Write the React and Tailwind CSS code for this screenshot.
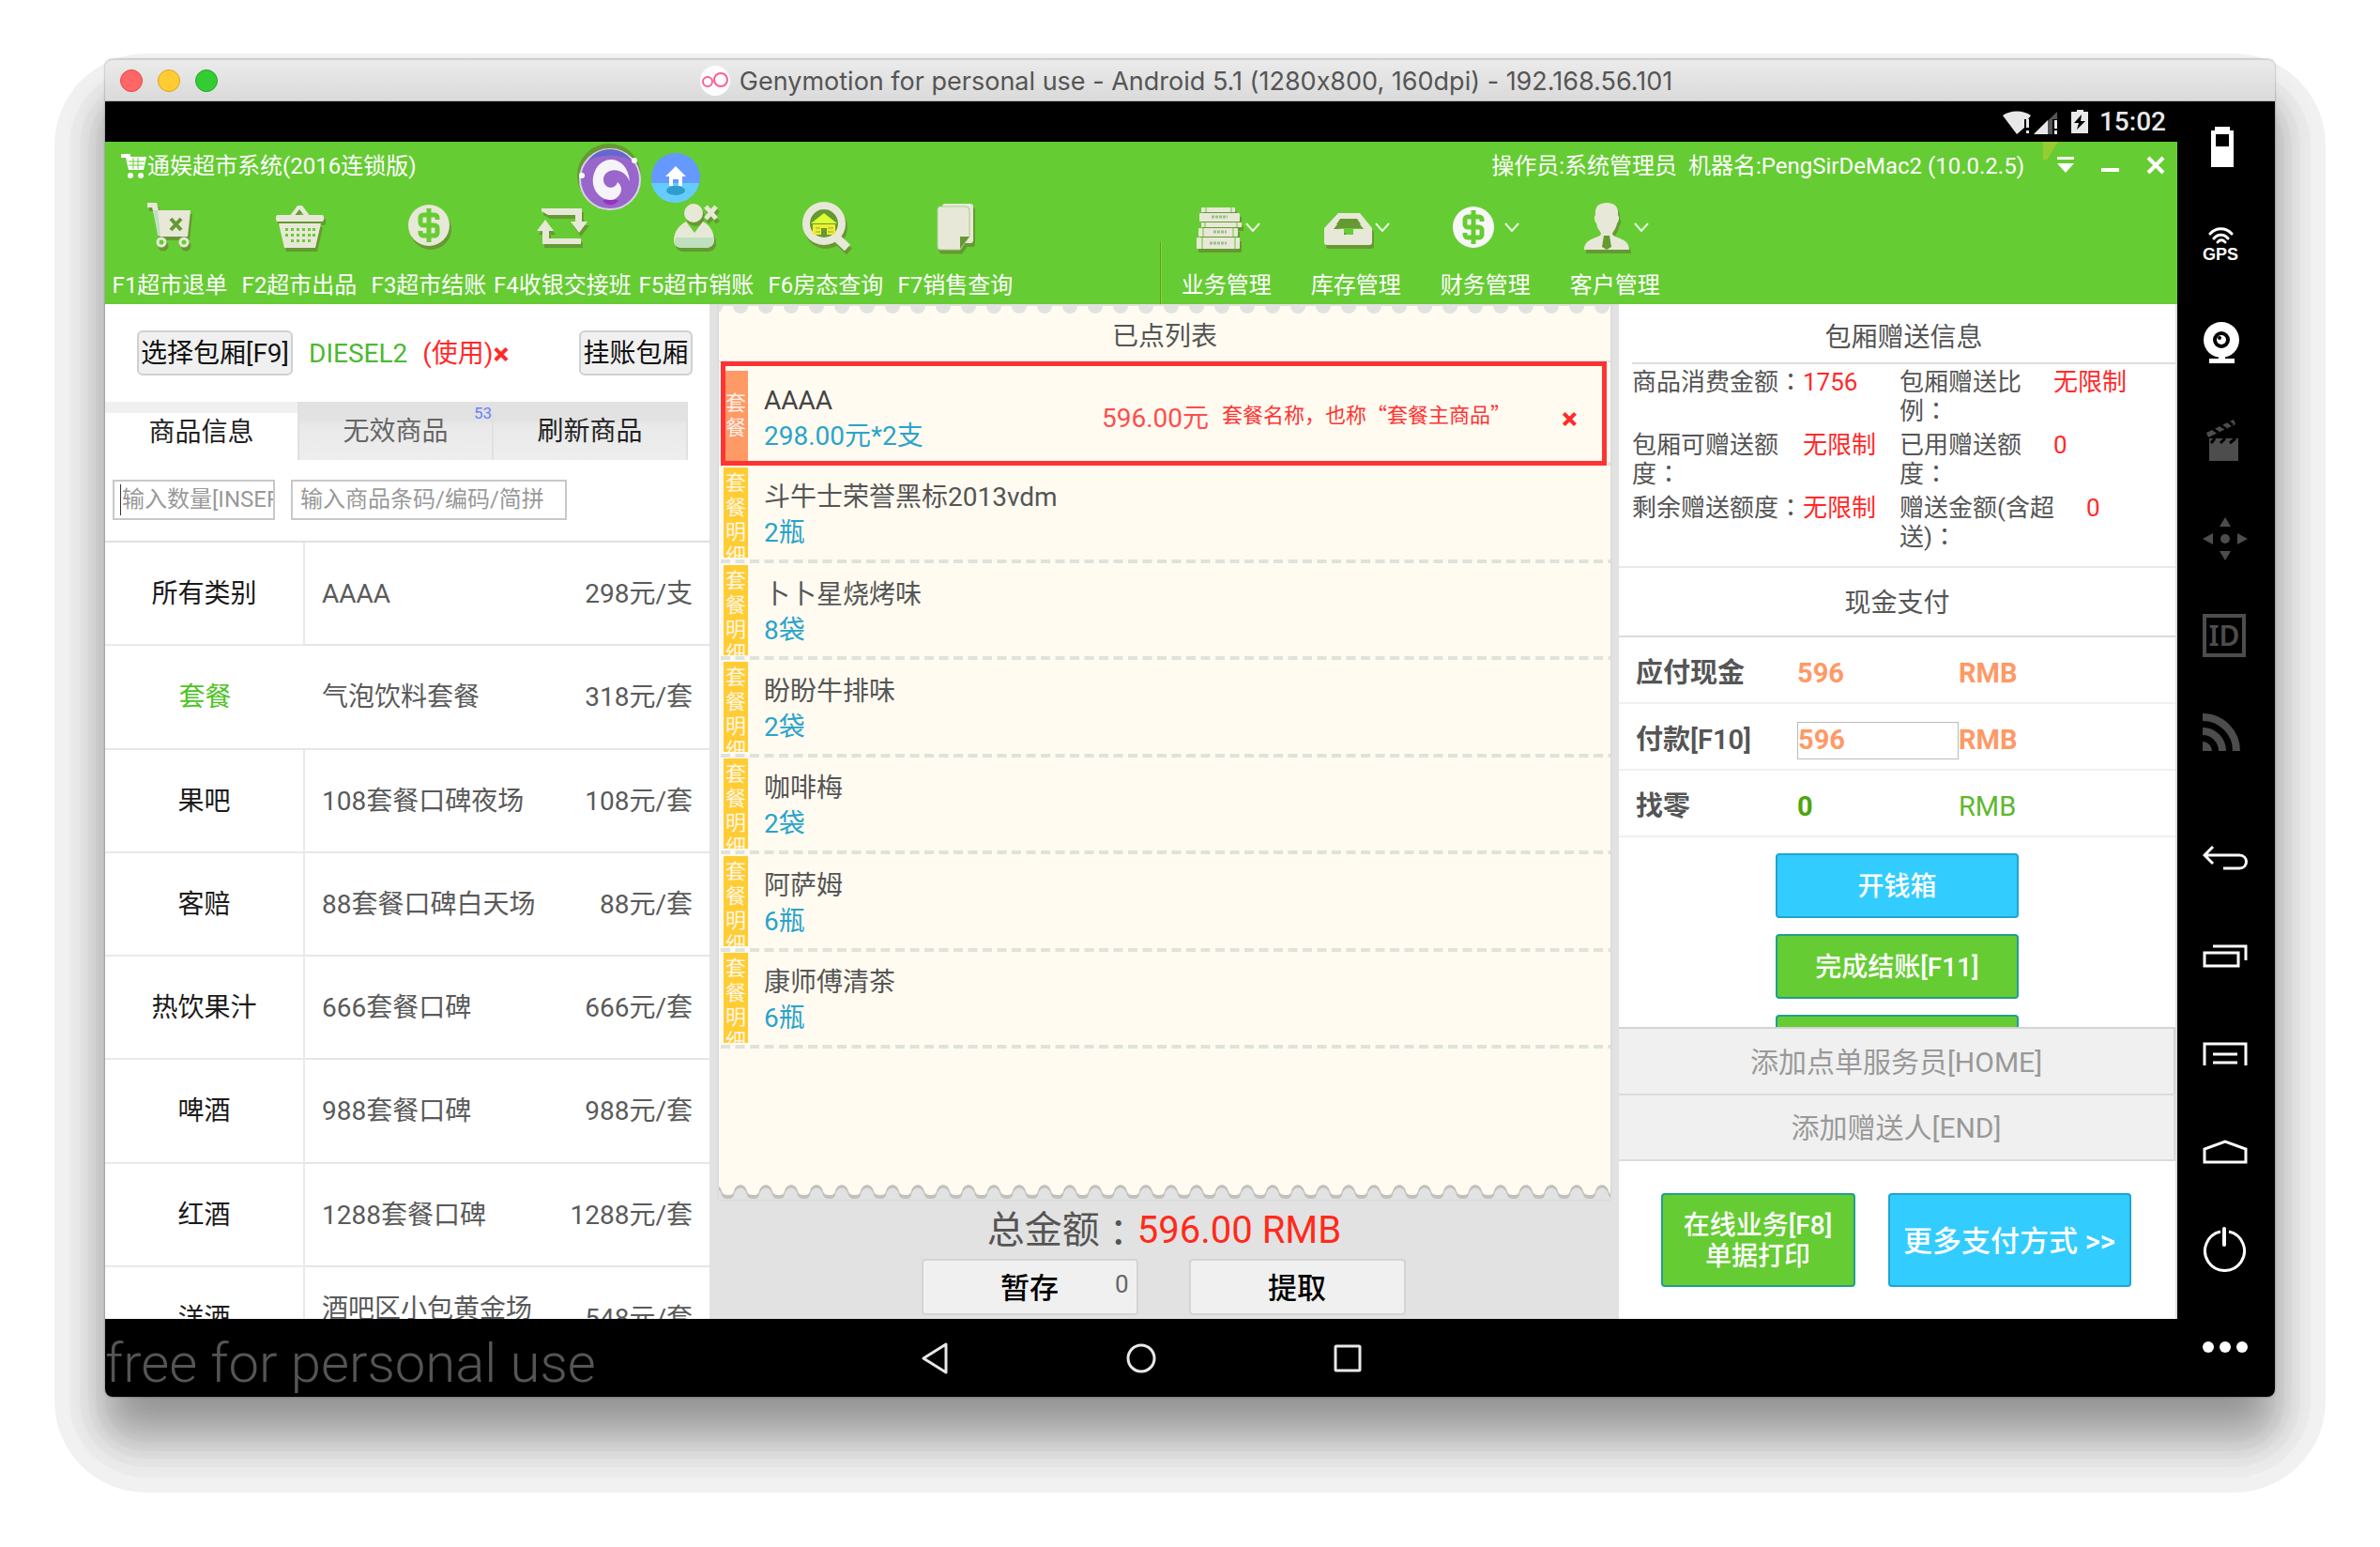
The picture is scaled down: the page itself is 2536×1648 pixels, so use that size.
import React from "react";

const CREAM = "#e8e8d8";
const LEAF = "#66cc33";
const MOSS = "#669933";

/* Full-width colon, centred in its cell */
const Colon = () => <span className="font-['Noto_Sans_CJK_TC',sans-serif] leading-none">：</span>;

/* ---------- toolbar icons ---------- */

const Glyph = ({ children, plain }) => (
  <svg
    viewBox="0 0 56 56"
    aria-hidden="true"
    className={plain ? "size-14 shrink-0" : "size-14 shrink-0 drop-shadow-[2px_4px_0_#669933]"}
    fill={CREAM}
  >
    {children}
  </svg>
);

const CartIcon = () => (
  <Glyph>
    <path d="M4 2h10l2 8h34l-3 28H17l-3-12L9 7H4z" fill={CREAM} />
    <path d="M10 10l5 0 3 27h-3z" fill="#bfe0bf" />
    <path d="M29 19l11 12M40 19L29 31" stroke={MOSS} strokeWidth="4" fill="none" />
    <circle cx="19" cy="44" r="4" fill={LEAF} stroke={CREAM} strokeWidth="3" />
    <circle cx="43" cy="44" r="4" fill={LEAF} stroke={CREAM} strokeWidth="3" />
  </Glyph>
);

const BasketIcon = () => (
  <Glyph>
    <path d="M17 17L26 5h5l9 12h-6l-6-8-6 8z" />
    <rect x="3" y="15" width="51" height="7" rx="2" />
    <path d="M6 24h45l-6 26H12z" />
    {[29, 35, 41].map((y, r) =>
      [14, 20, 26, 32, 38, 43].slice(r === 2 ? 1 : 0, r === 2 ? 5 : 6).map((x) => (
        <rect key={x + "-" + y} x={x - 1} y={y} width="3" height="3" fill={LEAF} />
      ))
    )}
  </Glyph>
);

const DollarShape = ({ fill }) => (
  <>
    <circle cx="28" cy="26" r="22" fill={fill} />
    <path
      d="M37 20v-2a3 3 0 0 0-3-3H22a3 3 0 0 0-3 3v5a3 3 0 0 0 3 3h12a3 3 0 0 1 3 3v5a3 3 0 0 1-3 3H22a3 3 0 0 1-3-3v-2M28 8v36"
      fill="none"
      stroke={LEAF}
      strokeWidth="5"
    />
  </>
);

const DollarIcon = () => (
  <Glyph>
    <DollarShape fill={CREAM} />
  </Glyph>
);

const PlainDollarIcon = () => (
  <Glyph plain>
    <g transform="translate(-5 2)">
      <DollarShape fill="#f7f7f7" />
    </g>
  </Glyph>
);

const RepeatIcon = () => (
  <Glyph>
    <path d="M6 8h43v14h6L46 34l-9-12h5v-7H13l-7-4z" />
    <path d="M10 20l9 12h-5v8h34v6H7V32H1z" />
  </Glyph>
);

const UserXIcon = () => (
  <Glyph>
    <circle cx="25" cy="13" r="10" />
    <path d="M17 22l9 12 9-12c8 4 12 12 12 20 0 5-4 8-10 8H14c-7 0-10-3-10-8 0-8 5-16 13-20z" />
    <path d="M6 39h40c2 7-2 11-9 11H14c-7 0-11-3-8-11z" fill="#bfe0bf" />
    <path d="M38 6l11 13M49 6L38 19" stroke={CREAM} strokeWidth="5" fill="none" />
  </Glyph>
);

const SearchHouseIcon = () => (
  <Glyph>
    <path d="M38 38l13 12" stroke={CREAM} strokeWidth="9" fill="none" />
    <circle cx="26" cy="24" r="19" fill={MOSS} stroke={CREAM} strokeWidth="8" />
    <path d="M12 24l14-11 14 11z" fill="#ddff33" />
    <path d="M14 25h24v11h-9v-7h-6v7h-9z" fill="#eeee33" />
    <path d="M17 29h5M17 33h5M30 29h6M30 33h6" stroke="#99aa33" strokeWidth="1" />
  </Glyph>
);

const DocIcon = () => (
  <Glyph>
    <rect x="14" y="3" width="33" height="42" rx="3" />
    <path d="M12 6h27a4 4 0 0 1 4 4v28L33 52H12a3 3 0 0 1-3-3V9a3 3 0 0 1 3-3z" stroke="#a6cf8e" strokeWidth="1" />
    <path d="M43 38H33v13z" fill={MOSS} />
  </Glyph>
);

const BooksIcon = () => (
  <Glyph>
    <rect x="9" y="7" width="36" height="5" />
    <rect x="7" y="13" width="43" height="9" rx="1" />
    <rect x="9" y="23" width="43" height="5" />
    <rect x="6" y="29" width="42" height="9" rx="1" />
    <rect x="4" y="39" width="46" height="12" rx="1" />
    <path d="M20 17h17M22 33h14M18 45h18" stroke="#99c08a" strokeWidth="3" strokeDasharray="3 1" />
    <path d="M14 7v5M41 7v5M13 23v5M47 23v5M11 29v9M43 29v9M10 39v12M45 39v12" stroke={LEAF} strokeWidth="1" />
  </Glyph>
);

const InboxIcon = () => (
  <Glyph>
    <path
      fillRule="evenodd"
      d="M17 13h23l13 16v15a3 3 0 0 1-3 3H5a3 3 0 0 1-3-3V29zM20 20l-8 10h11v6h10v-6h11l-8-10z"
    />
    <path d="M19 19h18l4 6H15z" fill={MOSS} />
  </Glyph>
);

const ManIcon = () => (
  <Glyph>
    <path d="M27 2c8 0 13 4 12 13 2 2 1 7-1 9-1 6-4 8-5 11 1 5 18 4 18 17H3c0-13 17-12 18-17-1-3-4-5-5-11-2-2-3-7-1-9C14 6 19 2 27 2z" />
    <path d="M24 37h6l2 12-5 3-5-3z" fill={MOSS} />
  </Glyph>
);

const TOOLS = [
  ["F1超市退单", CartIcon],
  ["F2超市出品", BasketIcon],
  ["F3超市结账", DollarIcon],
  ["F4收银交接班", RepeatIcon],
  ["F5超市销账", UserXIcon],
  ["F6房态查询", SearchHouseIcon],
  ["F7销售查询", DocIcon],
];

const MENUS = [
  ["业务管理", BooksIcon],
  ["库存管理", InboxIcon],
  ["财务管理", PlainDollarIcon],
  ["客户管理", ManIcon],
];

/* ---------- data ---------- */

const CATEGORIES = ["所有类别", "套餐", "果吧", "客赔", "热饮果汁", "啤酒", "红酒", "洋酒"];

const PRODUCTS = [
  ["AAAA", "298元/支"],
  ["气泡饮料套餐", "318元/套"],
  ["108套餐口碑夜场", "108元/套"],
  ["88套餐口碑白天场", "88元/套"],
  ["666套餐口碑", "666元/套"],
  ["988套餐口碑", "988元/套"],
  ["1288套餐口碑", "1288元/套"],
  ["酒吧区小包黄金场", "548元/套"],
];

const ORDER = [
  ["斗牛士荣誉黑标2013vdm", "2瓶"],
  ["卜卜星烧烤味", "8袋"],
  ["盼盼牛排味", "2袋"],
  ["咖啡梅", "2袋"],
  ["阿萨姆", "6瓶"],
  ["康师傅清茶", "6瓶"],
];

/* ---------- window chrome ---------- */

const TitleBar = () => (
  <div className="relative flex h-[45px] shrink-0 items-center justify-center rounded-t-lg border-t border-b border-t-[#cfcfcf] border-b-[#b8b8b8] bg-linear-to-b from-[#ebebeb] to-[#dadada]">
    <div className="absolute left-4 flex gap-4">
      <button aria-label="Close" className="size-6 rounded-full border border-[#ee4444] bg-[#ff6666]" />
      <button aria-label="Minimize" className="size-6 rounded-full border border-[#dba520] bg-[#ffcc33]" />
      <button aria-label="Zoom" className="size-6 rounded-full border border-[#22a822] bg-[#33cc33]" />
    </div>
    <svg viewBox="0 0 32 32" className="mr-[10px] size-8" aria-hidden="true">
      <circle cx="16" cy="16" r="16" fill="#fff" />
      <g fill="none" stroke="#ff5c93" strokeWidth="2">
        <circle cx="8" cy="17" r="5" />
        <circle cx="22" cy="15" r="7" />
      </g>
    </svg>
    <span className="pt-[2px] pr-2 font-['Inter',sans-serif] text-[27px] leading-none text-[#555] [font-feature-settings:'calt'_0]">
      Genymotion for personal use - Android 5.1 (1280x800, 160dpi) - 192.168.56.101
    </span>
  </div>
);

const StatusBar = () => (
  <div className="flex h-[43px] shrink-0 items-center justify-end gap-3 bg-black pr-3 text-[#e8e8e8]">
    <svg viewBox="0 0 92 28" className="h-7 w-[92px]" aria-hidden="true">
      <path d="M1 7C9 1 23 1 31 7l-3 4h-4v9l-8 7z" fill="#e8e8e8" />
      <path d="M26 11h3v9h-3zM26 23h3v3h-3z" fill="#e8e8e8" />
      <path d="M34 27L59 3v8h-5v16z" fill="#555" />
      <path d="M34 27L49 12v15z" fill="#e8e8e8" />
      <path d="M56 12h3v9h-3zM56 23h3v4h-3z" fill="#e8e8e8" />
      <path d="M80 1h7v2h5v23H74V3h6z" fill="#e8e8e8" />
      <path d="M85 6l-8 9h5l-2 7 9-9h-5z" fill="#000" />
    </svg>
    <span className="text-[28px] font-medium">15:02</span>
  </div>
);

const Header = () => (
  <header className="relative flex shrink-0 flex-col bg-[#66cc33] text-white">
    <div className="flex h-[52px] items-center pr-[11px] pl-[17px] text-[24px]">
      <svg viewBox="0 0 28 28" className="size-7" aria-hidden="true" fill="#fff">
        <path d="M0 1h10v3h17l-3 14H8L5 5H0z" />
        <path d="M8 9h17M8 13h16M13 5v12M18 5v12" stroke={LEAF} strokeWidth="1" />
        <circle cx="10" cy="24" r="3" />
        <circle cx="21" cy="24" r="3" />
      </svg>
      <h1>通娱超市系统(2016连锁版)</h1>
      <p className="ml-auto flex gap-3">
        <span>操作员:系统管理员</span>
        <span>机器名:PengSirDeMac2 (10.0.2.5)</span>
      </p>
      <div className="ml-8 flex gap-6">
        <button aria-label="收起" className="flex size-6 items-center justify-center">
          <svg viewBox="0 0 24 24" className="size-6" fill="#fff" aria-hidden="true">
            <path d="M3 2h18v3H3zM3 9h18l-9 10z" />
          </svg>
        </button>
        <button aria-label="最小化" className="flex size-6 items-center justify-center">
          <svg viewBox="0 0 24 24" className="size-6" fill="#fff" aria-hidden="true">
            <path d="M2 14h19v4H2z" />
          </svg>
        </button>
        <button aria-label="关闭" className="flex size-6 items-center justify-center">
          <svg viewBox="0 0 24 24" className="size-6" stroke="#fff" strokeWidth="4" aria-hidden="true">
            <path d="M4 3l16 16M20 3L4 19" />
          </svg>
        </button>
      </div>
      <svg viewBox="0 0 16 19" className="absolute top-0 right-[127px] h-[19px] w-4" aria-hidden="true">
        <path d="M0 0h16L4 19H0z" fill="#99cc33" />
      </svg>
    </div>

    <nav className="flex h-[121px] text-[24px]">
      {TOOLS.map(([label, Icon]) => (
        <button key={label} className="flex min-w-[138px] flex-col items-center justify-between pt-[11px] whitespace-nowrap">
          <Icon />
          <span className="leading-[40px]">{label}</span>
        </button>
      ))}
      <div className="mt-[55px] ml-[149px] w-[2px] border-l border-[#4fa61f] bg-[#99cc33]" />
      {MENUS.map(([label, Icon]) => (
        <button key={label} className="flex w-[138px] flex-col items-center justify-between pt-[11px] whitespace-nowrap">
          <span className="flex items-center">
            <Icon />
            <svg viewBox="0 0 16 10" className="h-[10px] w-4" fill="none" stroke="#e6f5dc" strokeWidth="2" aria-hidden="true">
              <path d="M1 1l7 8 7-8" />
            </svg>
          </span>
          <span className="leading-[40px]">{label}</span>
        </button>
      ))}
    </nav>

    {/* floating assistant bubbles */}
    <div className="absolute top-[2px] left-[503px] flex items-center gap-[10px]">
      <svg viewBox="0 0 68 72" className="h-[72px] w-[68px]" aria-hidden="true">
        <circle cx="34" cy="34" r="34" fill="#669933" />
        <circle cx="35" cy="38" r="32" fill="#9966cc" stroke="#d9d4ea" strokeWidth="2" />
        <path d="M12 18C22 2 48 2 58 18c-12-7-34-7-46 0z" fill="#6666cc" />
        <circle cx="61" cy="18" r="3" fill="#fff" />
        <circle cx="5" cy="34" r="3" fill="#fff" />
        <path d="M27 60h17c-3 7-14 7-17 0z" fill="#9933bb" />
        <path
          d="M56 40C54 15 30 10 20 27c-9 17 2 33 16 33 10-1 15-13 7-19-2 8-14 8-15-2-1-12 20-17 28 1z"
          fill="#f6f4fa"
        />
      </svg>
      <svg viewBox="0 0 54 54" className="size-[54px]" aria-hidden="true">
        <circle cx="27" cy="27" r="26" fill="#6699ff" />
        <path d="M1 33h51a26 26 0 0 1-51 0z" fill="#66ccff" />
        <ellipse cx="27" cy="41" rx="10" ry="5" fill="#2f9ccc" />
        <path d="M27 15l11 11h-4v10h-4v-7h-6v7h-4V26h-4z" fill="#fff" />
      </svg>
    </div>
  </header>
);

/* ---------- left column ---------- */

const ProductPanel = () => (
  <section className="flex w-[644px] shrink-0 flex-col bg-white text-[28px]">
    <div className="flex h-[104px] shrink-0 items-center pr-[18px] pl-[34px]">
      <button className="h-12 w-[166px] rounded-md border-2 border-[#d0d0d0] bg-[#f0f0f0] pt-[2px] leading-none whitespace-nowrap text-[#111]">
        选择包厢[F9]
      </button>
      <span className="ml-[17px] pt-[2px] text-[#4db832]">DIESEL2</span>
      <span className="ml-4 flex items-center pt-[2px] leading-none text-[#ff2a2a]">
        (使用)
        <button aria-label="取消包厢" className="text-[32px] font-extrabold">×</button>
      </span>
      <button className="ml-auto h-12 w-[121px] rounded-md border-2 border-[#d0d0d0] bg-[#f0f0f0] pt-[2px] leading-none whitespace-nowrap text-[#111]">
        挂账包厢
      </button>
    </div>

    <div className="mr-[23px] flex h-[62px] shrink-0 leading-none">
      <button className="flex-1 border-t-[12px] border-[#f0f0f0] bg-white pb-2 text-[#222]">商品信息</button>
      <button className="relative flex-1 border-l-2 border-[#e0e0e0] bg-linear-to-b from-[#e2e2e2] from-30% via-[#e9e9e9] via-40% to-[#eeeeee] pt-[2px] text-[#666]">
        无效商品
        <span className="absolute top-1 right-0 text-[17px] text-[#6680ff]">53</span>
      </button>
      <button className="flex-1 border-x-2 border-[#e0e0e0] bg-linear-to-b from-[#e2e2e2] from-30% via-[#e9e9e9] via-40% to-[#eeeeee] pt-[2px] text-[#222]">
        刷新商品
      </button>
    </div>

    <div className="flex h-[88px] shrink-0 items-center gap-[17px] border-b-2 border-[#e0e0e0] pb-[2px] pl-2 text-[24px]">
      <div className="relative">
        <input
          aria-label="输入数量"
          placeholder="输入数量[INSERT]"
          className="block h-[43px] w-[173px] border-2 border-[#c8c8c8] pl-2 placeholder:text-[#999]"
        />
        <span className="absolute top-[5px] left-2 h-[33px] w-px bg-[#333]" />
      </div>
      <input
        aria-label="输入商品条码"
        placeholder="输入商品条码/编码/简拼"
        className="h-[43px] w-[294px] border-2 border-[#c8c8c8] pl-2 placeholder:text-[#999]"
      />
    </div>

    <div className="flex min-h-0 flex-1 overflow-hidden">
      <ul className="w-[213px] shrink-0">
        {CATEGORIES.map((name) => (
          <li key={name} className="h-2/15">
            <button
              className={
                name === "套餐"
                  ? "size-full border-b-2 border-[#e6e6e6] pt-[2px] text-[#4dc41f]"
                  : "size-full border-r-2 border-b-2 border-[#e9e9e9] pt-[2px] text-[#1a1a1a]"
              }
            >
              {name}
            </button>
          </li>
        ))}
      </ul>
      <ul className="min-w-0 flex-1">
        {PRODUCTS.map(([name, price], i) => (
          <li
            key={name}
            className="flex h-2/15 items-center justify-between border-b-2 border-[#e6e6e6] px-[18px] pt-[2px] whitespace-nowrap text-[#5a5a5a]"
          >
            <span className={i === 7 ? "pb-5" : ""}>{name}</span>
            <span>{price}</span>
          </li>
        ))}
      </ul>
    </div>
  </section>
);

/* ---------- middle column ---------- */

const Dashes = () => (
  <svg className="h-1 w-full" aria-hidden="true">
    <line x1="2" y1="2" x2="100%" y2="2" stroke="#e0e2dc" strokeWidth="4" strokeDasharray="10 5.5" />
  </svg>
);

const TopEdge = () => (
  <svg className="h-[11px] w-full shrink-0" aria-hidden="true">
    <defs>
      <pattern id="holes" x="10" y="0" width="27" height="11" patternUnits="userSpaceOnUse">
        <circle cx="13" cy="2" r="8" fill="#e2e2e2" />
      </pattern>
    </defs>
    <rect width="100%" height="2" fill="#e2e2e2" />
    <rect width="100%" height="11" fill="url(#holes)" />
  </svg>
);

const BottomEdge = () => (
  <svg className="h-4 w-full shrink-0" aria-hidden="true">
    <defs>
      <pattern id="teeth" x="10" y="0" width="27" height="16" patternUnits="userSpaceOnUse">
        <path d="M0 0v15c4 0 5-1 6-4 2-10 12-10 14 0 1 3 3 4 7 4V0z" fill="#c0c0bc" />
        <path d="M0 0v11c4 0 5-1 6-4 2-9 12-9 14 0 1 3 3 4 7 4V0z" fill="#fffbf0" />
      </pattern>
    </defs>
    <rect width="100%" height="16" fill="#e2e2e2" />
    <rect width="100%" height="16" fill="url(#teeth)" />
  </svg>
);

const OrderPanel = () => (
  <section className="flex min-w-0 flex-1 flex-col bg-[#e2e2e2] text-[28px]">
    <div className="mr-[9px] ml-[10px] flex flex-1 flex-col bg-[#fffbf0] shadow-[0_0_3px_#ccc]">
      <TopEdge />
      <h2 className="flex h-[51px] shrink-0 items-start justify-center border-b-2 border-[#e3e3e3] text-[#555]">
        <span className="pt-1 leading-[40px]">已点列表</span>
      </h2>
      <ul className="flex h-[731px] flex-col pt-[7px]">
        <li className="relative flex flex-1 flex-col">
          <div className="flex flex-1 items-center pl-[5px]">
            <span className="flex h-24 w-[26px] flex-col items-center justify-center bg-[#ff9966] text-[22px] leading-[26px] text-[#fff0e8]">
              <span>套</span>
              <span>餐</span>
            </span>
            <div className="ml-[17px] w-[360px] pt-[6px] leading-[38px]">
              <p className="text-[#444]">AAAA</p>
              <p className="text-[#2aa3cc]">298.00元*2支</p>
            </div>
            <span className="pt-[6px] text-[#ff4d4d]">596.00元</span>
            <span className="mb-1 ml-[14px] font-['Noto_Sans_CJK_SC',sans-serif] text-[22px] whitespace-nowrap text-[#ff3333]">
              套餐名称，也称“套餐主商品”
            </span>
            <button aria-label="删除" className="mr-[35px] ml-auto pt-[6px] text-[32px] font-extrabold text-[#ff2a2a]">×</button>
          </div>
          <Dashes />
          <div className="absolute -top-2 right-1 bottom-0 left-[2px] border-[5px] border-[#ff3333]" />
        </li>
        {ORDER.map(([name, qty]) => (
          <li key={name} className="flex flex-1 flex-col">
            <div className="flex flex-1 items-center pl-[5px]">
              <span className="flex h-24 w-[26px] flex-col items-center overflow-hidden bg-[#ffcc33] pt-1 text-[22px] leading-[26px] text-[#fff6e6]">
                {"套餐明细".split("").map((c) => (
                  <span key={c}>{c}</span>
                ))}
              </span>
              <div className="ml-[17px] pt-[6px] leading-[38px]">
                <p className="text-[#555]">{name}</p>
                <p className="text-[#2aa3cc]">{qty}</p>
              </div>
            </div>
            <Dashes />
          </li>
        ))}
      </ul>
      <div className="flex-1" />
      <BottomEdge />
    </div>
    <p className="flex h-[63px] shrink-0 items-center justify-center pt-[2px] text-[40px] text-[#555]">
      总金额
      <Colon />
      <span className="text-[#ff2a1a]">596.00 RMB</span>
    </p>
    <div className="flex shrink-0 justify-center gap-[54px] pr-[2px] pb-1 text-[31px] font-medium text-black">
      <button className="relative h-[60px] w-[231px] rounded-sm border-2 border-[#d4d4d4] bg-[#f0f0f0] pt-[2px] leading-none">
        暂存
        <span className="absolute top-3 right-2 text-[26px] font-normal text-[#666]">0</span>
      </button>
      <button className="h-[60px] w-[231px] rounded-sm border-2 border-[#d4d4d4] bg-[#f0f0f0] pt-[2px] leading-none">提取</button>
    </div>
  </section>
);

/* ---------- right column ---------- */

const Info = ({ label, value, width }) => (
  <>
    <dt className={width}>
      {label}
      <Colon />
    </dt>
    <dd className="text-[#ff2a2a]">{value}</dd>
  </>
);

const PayPanel = () => (
  <section className="flex w-[595px] shrink-0 flex-col border-r-2 border-[#dcdcdc] bg-white text-[28px] text-[#555]">
    <h2 className="ml-[14px] flex h-[64px] shrink-0 items-center justify-center border-b-2 border-[#dcdcdc] pt-[10px]">包厢赠送信息</h2>
    <dl className="flex h-[217px] shrink-0 flex-wrap content-start gap-y-[5px] border-b-2 border-[#e9e9e9] pt-1 pl-[14px] text-[26px] leading-[31px]">
      <div className="flex w-[285px]">
        <Info label="商品消费金额" value="1756" width="w-[182px] whitespace-nowrap" />
      </div>
      <div className="flex w-[280px]">
        <Info label="包厢赠送比例" value="无限制" width="w-[164px]" />
      </div>
      <div className="flex w-[285px]">
        <Info label="包厢可赠送额度" value="无限制" width="w-[182px]" />
      </div>
      <div className="flex w-[280px]">
        <Info label="已用赠送额度" value="0" width="w-[164px]" />
      </div>
      <div className="flex w-[285px]">
        <Info label="剩余赠送额度" value="无限制" width="w-[182px] whitespace-nowrap" />
      </div>
      <div className="flex w-[280px]">
        <Info label="赠送金额(含超送)" value="0" width="w-[199px]" />
      </div>
    </dl>
    <h2 className="flex h-[74px] shrink-0 items-center justify-center border-b-2 border-[#dcdcdc] pt-1">现金支付</h2>
    <div className="flex min-h-0 flex-1 flex-col overflow-hidden">
      <div className="grid h-[71px] shrink-0 grid-cols-[172px_172px_1fr] items-center border-b-2 border-[#f0f0f0] pt-2 pl-[18px] text-[29px] font-semibold">
        <span>应付现金</span>
        <span className="font-bold text-[#ff9966]">596</span>
        <span className="font-bold text-[#ff9966]">RMB</span>
      </div>
      <div className="grid h-[71px] shrink-0 grid-cols-[172px_172px_1fr] items-center border-b-2 border-[#f0f0f0] pt-2 pl-[18px] text-[29px] font-semibold">
        <label htmlFor="paid">付款[F10]</label>
        <input id="paid" defaultValue="596" className="h-10 w-full border border-[#bbb] font-bold text-[#ff9966]" />
        <span className="font-bold text-[#ff9966]">RMB</span>
      </div>
      <div className="grid h-[71px] shrink-0 grid-cols-[172px_172px_1fr] items-center border-b-2 border-[#f0f0f0] pt-2 pl-[18px] text-[29px] font-semibold">
        <span>找零</span>
        <span className="font-bold text-[#4da60d]">0</span>
        <span className="font-normal text-[#5cb82e]">RMB</span>
      </div>
      <div className="flex flex-col items-center gap-[17px] pt-[17px] font-medium text-white">
        <button className="h-[69px] w-[259px] shrink-0 rounded border-2 border-[#1ea5d0] bg-[#33ccff] pt-[2px] leading-none">开钱箱</button>
        <button className="h-[69px] w-[259px] shrink-0 rounded border-2 border-[#1f9f8f] bg-[#66cc33] pt-[2px] leading-none">完成结账[F11]</button>
        <button aria-label="更多" className="h-[69px] w-[259px] shrink-0 rounded border-2 border-[#1f9f8f] bg-[#66cc33]" />
      </div>
    </div>
    <button className="h-[71px] shrink-0 border-t-2 border-r-2 border-[#d4d4d4] bg-[#f0f0f0] pt-[2px] text-[30px] leading-none text-[#999]">
      添加点单服务员[HOME]
    </button>
    <button className="h-[72px] shrink-0 border-y-2 border-r-2 border-[#dcdcdc] bg-[#f0f0f0] pt-[2px] text-[30px] leading-none text-[#999]">
      添加赠送人[END]
    </button>
    <div className="flex h-[168px] shrink-0 items-start justify-center gap-[35px] pt-[34px] pr-[3px] font-medium text-white">
      <button className="h-[100px] w-[207px] rounded border-2 border-[#1f9f8f] bg-[#66cc33] pt-[2px] leading-[33px]">
        在线业务[F8]
        <br />
        单据打印
      </button>
      <button className="h-[100px] w-[259px] rounded border-2 border-[#1ea5d0] bg-[#33ccff] pt-1 text-[31px] whitespace-nowrap">
        更多支付方式 &gt;&gt;
      </button>
    </div>
  </section>
);

/* ---------- emulator side controls ---------- */

const Side = ({ label, children }) => (
  <button aria-label={label} className="flex h-12 w-12 flex-col items-center justify-center">
    {children}
  </button>
);

const SideSvg = ({ dim, children }) => (
  <svg viewBox="0 0 48 48" className={dim ? "size-12 text-[#4d4d4d]" : "size-12 text-white"} fill="currentColor" aria-hidden="true">
    {children}
  </svg>
);

const Sidebar = () => (
  <aside className="flex w-[104px] shrink-0 flex-col gap-[86px] bg-black pt-[25px] pl-[27px]">
    <div className="flex flex-col gap-14">
      <Side label="Battery">
        <SideSvg>
          <path fillRule="evenodd" d="M13 2h16v4h4v39H9V6h4zM14 10v13h14V10z" />
        </SideSvg>
      </Side>
      <Side label="GPS">
        <span className="flex h-12 w-12 flex-col items-start">
          <svg viewBox="0 0 38 24" className="h-6 w-[38px]" fill="none" stroke="#fff" strokeWidth="3" strokeLinecap="round" aria-hidden="true">
            <path d="M8 12c6-7 17-7 23 0M12 17c4-5 11-5 15 0M16 21c2-3 6-3 8 0" />
          </svg>
          <span className="font-['Liberation_Sans',sans-serif] text-[18px] leading-[20px] font-bold text-white">GPS</span>
        </span>
      </Side>
      <Side label="Camera">
        <SideSvg>
          <circle cx="20" cy="21" r="19" />
          <path d="M17 38h7v3h10v5H7v-5h10z" />
          <circle cx="20" cy="21" r="9" fill="#000" />
          <circle cx="20" cy="21" r="5" />
          <circle cx="18" cy="19" r="2" fill="#000" />
        </SideSvg>
      </Side>
      <Side label="Screencast">
        <SideSvg dim>
          <path d="M7 22h31v24H7z" />
          <path d="M4 16L33 2l2 5L6 21z" />
          <path d="M11 12l6 4M19 8l6 4M27 4l5 4M9 27l4-5M19 27l5-5M29 27l6-5" stroke="#000" strokeWidth="3" />
        </SideSvg>
      </Side>
      <Side label="Move">
        <SideSvg dim>
          <circle cx="24" cy="25" r="5" />
          <path d="M24 2l6 10H18zM24 48l6-10H18zM0 25l11-6v12zM48 25l-11-6v12z" />
        </SideSvg>
      </Side>
      <Side label="Identifiers">
        <span className="mr-[2px] flex size-[46px] items-center justify-center border-4 border-[#4d4d4d] font-['Noto_Sans',sans-serif] text-[30px] leading-none font-semibold text-[#4d4d4d]">
          ID
        </span>
      </Side>
      <Side label="Network">
        <SideSvg dim>
          <g fill="none" stroke="currentColor" strokeWidth="8">
            <path d="M0 7a36 36 0 0 1 36 36M0 22a21 21 0 0 1 21 21" />
          </g>
          <path d="M0 33a10 10 0 0 1 10 10H0z" />
        </SideSvg>
      </Side>
    </div>
    <div className="flex flex-col gap-14">
      <Side label="Back">
        <SideSvg>
          <path d="M11 11L2 20l9 9M2 20h37c10 0 10 14 0 14H22" fill="none" stroke="currentColor" strokeWidth="3" />
        </SideSvg>
      </Side>
      <Side label="Recent apps">
        <SideSvg>
          <path d="M2 20h36v14H2zM11 13h35v15" fill="none" stroke="currentColor" strokeWidth="3" />
        </SideSvg>
      </Side>
      <Side label="Menu">
        <SideSvg>
          <path d="M2 36V13h44v23M11 24h26M11 33h26" fill="none" stroke="currentColor" strokeWidth="3" />
        </SideSvg>
      </Side>
      <Side label="Home">
        <SideSvg>
          <path d="M2 35V21l22-8 22 8v14z" fill="none" stroke="currentColor" strokeWidth="3" />
        </SideSvg>
      </Side>
      <Side label="Power">
        <SideSvg>
          <path d="M19 5a21 21 0 1 0 9 0" fill="none" stroke="currentColor" strokeWidth="3" />
          <path d="M23 2v17" stroke="currentColor" strokeWidth="4" strokeLinecap="round" />
        </SideSvg>
      </Side>
      <Side label="More">
        <SideSvg>
          <circle cx="6" cy="24" r="6" />
          <circle cx="24" cy="24" r="6" />
          <circle cx="42" cy="24" r="6" />
        </SideSvg>
      </Side>
    </div>
  </aside>
);

const NavBar = () => (
  <footer className="relative flex h-[83px] shrink-0 items-center justify-center bg-black">
    <span className="absolute bottom-0 left-0 font-['Roboto',sans-serif] text-[58px] leading-[72px] font-light text-[#555]">free for personal use</span>
    <div className="flex gap-[182px]">
      <button aria-label="Back">
        <svg viewBox="0 0 38 38" className="size-[38px]" fill="none" stroke="#e8e8e8" strokeWidth="3" aria-hidden="true">
          <path d="M31 4v30L7 19z" strokeLinejoin="round" />
        </svg>
      </button>
      <button aria-label="Home">
        <svg viewBox="0 0 38 38" className="size-[38px]" fill="none" stroke="#e8e8e8" strokeWidth="3" aria-hidden="true">
          <circle cx="19" cy="19" r="14" />
        </svg>
      </button>
      <button aria-label="Overview">
        <svg viewBox="0 0 38 38" className="size-[38px]" fill="none" stroke="#e8e8e8" strokeWidth="3" aria-hidden="true">
          <rect x="6" y="6" width="26" height="26" rx="1" />
        </svg>
      </button>
    </div>
  </footer>
);

export default function App() {
  return (
    <div className="isolate flex h-screen flex-col bg-white px-[112px] pt-[63px] pb-[160px] font-['Roboto','Noto_Sans_CJK_SC',sans-serif]">
      <main className="relative flex min-h-0 flex-1 flex-col rounded-lg shadow-[0_0_2px_rgba(0,0,0,0.5),0_40px_44px_-6px_rgba(0,0,0,0.32)]">
        {/* stepped halo around the window */}
        <div className="absolute inset-x-0 top-12 -bottom-12 -z-10 rounded-[44px] bg-[#d8d8d8] shadow-[0_0_0_10px_#dcdcdc,0_0_0_18px_#e1e1e1,0_0_0_27px_#e6e6e6,0_0_0_38px_#ebebeb,0_0_0_54px_#f1f1f1]" />
        <TitleBar />
        <div className="flex min-h-0 flex-1 overflow-hidden rounded-b-lg">
          <div className="flex min-w-0 flex-1 flex-col">
            <StatusBar />
            <Header />
            <div className="flex min-h-0 flex-1">
              <ProductPanel />
              <OrderPanel />
              <PayPanel />
            </div>
            <NavBar />
          </div>
          <Sidebar />
        </div>
      </main>
    </div>
  );
}
